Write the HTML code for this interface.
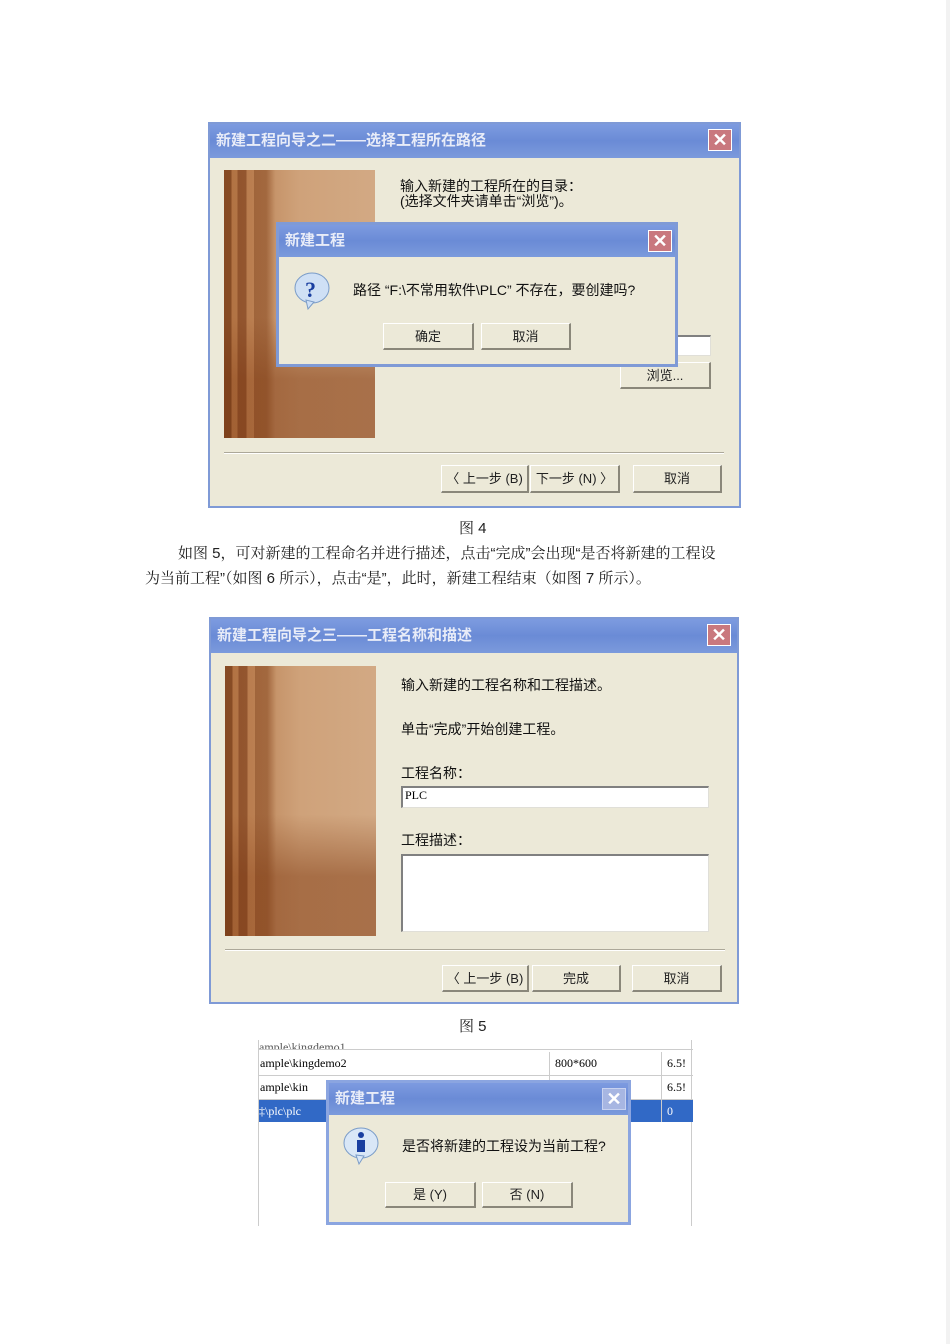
<!DOCTYPE html>
<html><head><meta charset="utf-8"><style>
*{margin:0;padding:0;box-sizing:border-box}
body{width:950px;height:1344px;background:#fff;position:relative;font-family:"Liberation Sans","Noto Sans CJK SC",sans-serif;overflow:hidden}
.a{position:absolute}
.dlg{position:absolute;background:#ece9d8;border:2px solid #7f9ad6}
.tb{position:absolute;left:0;right:0;top:0;background:linear-gradient(#7d9be0,#6a8bd6 50%,#7b9adc);color:#e8ecf8;font-size:15px;font-weight:bold;padding-left:6px}
.x{position:absolute;width:24px;height:22px;background:#c9787e;border:1px solid #fff;color:#fff;font-size:18px;line-height:20px;text-align:center;font-weight:bold}
.btn{position:absolute;background:#ece9d8;border:1px solid #fff;border-right:2px solid #8a877a;border-bottom:2px solid #8a877a;font-size:13px;text-align:center;color:#222}
.t{position:absolute;font-size:14px;color:#111;white-space:nowrap}
.pic{position:absolute;background:
linear-gradient(90deg,rgba(110,50,15,.65) 0 5%,rgba(170,100,50,.4) 5% 9%,rgba(120,55,20,.6) 9% 15%,rgba(180,110,60,.35) 15% 20%,rgba(130,65,25,.5) 20% 28%,transparent 34%),
linear-gradient(0deg,rgba(140,75,35,.6) 0 22%,transparent 45%),
linear-gradient(90deg,#b4784a,#cfa27a 50%,#d2a984)}
.sep{position:absolute;height:2px;border-top:1px solid #aca899;border-bottom:1px solid #fff}
.in{position:absolute;background:#fff;border-top:2px solid #808080;border-left:2px solid #808080;border-right:1px solid #e0dfd8;border-bottom:1px solid #e0dfd8}
p.tx{position:absolute;font-size:15px;color:#222;white-space:nowrap;font-family:"Liberation Sans","Noto Serif CJK SC",serif}
</style></head><body>

<div class="dlg" style="left:208px;top:122px;width:533px;height:386px">
 <div class="tb" style="height:34px;line-height:34px">新建工程向导之二——选择工程所在路径</div>
 <div class="x" style="left:498px;top:5px">✕</div>
 <div class="pic" style="left:14px;top:46px;width:151px;height:268px"></div>
 <div class="t" style="left:190px;top:55px;line-height:15px">输入新建的工程所在的目录：<br>(选择文件夹请单击“浏览”)。</div>
 <div class="in" style="left:468px;top:211px;width:33px;height:21px;border-left:none"></div>
 <div class="btn" style="left:410px;top:238px;width:91px;height:27px;line-height:25px">浏览...</div>
 <div class="sep" style="left:14px;top:328px;width:500px"></div>
 <div class="btn" style="left:231px;top:341px;width:88px;height:28px;line-height:26px">〈 上一步 (B)</div>
 <div class="btn" style="left:320px;top:341px;width:90px;height:28px;line-height:26px">下一步 (N) 〉</div>
 <div class="btn" style="left:423px;top:341px;width:89px;height:28px;line-height:26px">取消</div>
</div>
<div class="dlg" style="left:276px;top:222px;width:402px;height:145px;border-width:3px">
 <div class="tb" style="height:32px;line-height:32px">新建工程</div>
 <div class="x" style="left:369px;top:5px">✕</div>
 <svg class="a" style="left:15px;top:47px" width="36" height="38"><ellipse cx="18" cy="16" rx="17" ry="15" fill="#cfe0f5" stroke="#7a9cc8"/><path d="M12 28 L14 37 L20 30z" fill="#cfe0f5" stroke="#7a9cc8"/><text x="11" y="25" font-size="22" font-weight="bold" fill="#1a3fa0" font-family="Liberation Serif">?</text></svg>
 <div class="t" style="left:74px;top:55px">路径 “F:\不常用软件\PLC” 不存在，要创建吗?</div>
 <div class="btn" style="left:104px;top:98px;width:91px;height:27px;line-height:25px">确定</div>
 <div class="btn" style="left:202px;top:98px;width:90px;height:27px;line-height:25px">取消</div>
</div>

<p class="tx" style="left:459px;top:517px">图 4</p>
<p class="tx" style="left:178px;top:542px">如图 5，可对新建的工程命名并进行描述，点击“完成”会出现“是否将新建的工程设</p>
<p class="tx" style="left:145px;top:567px">为当前工程”（如图 6 所示），点击“是”，此时，新建工程结束（如图 7 所示）。</p>

<div class="dlg" style="left:209px;top:617px;width:530px;height:387px">
 <div class="tb" style="height:34px;line-height:34px">新建工程向导之三——工程名称和描述</div>
 <div class="x" style="left:496px;top:5px">✕</div>
 <div class="pic" style="left:14px;top:47px;width:151px;height:270px"></div>
 <div class="t" style="left:190px;top:56px">输入新建的工程名称和工程描述。</div>
 <div class="t" style="left:190px;top:100px">单击“完成”开始创建工程。</div>
 <div class="t" style="left:190px;top:144px">工程名称：</div>
 <div class="in" style="left:190px;top:167px;width:308px;height:22px;font-size:12px;padding-left:2px;font-family:'Liberation Serif',serif">PLC</div>
 <div class="t" style="left:190px;top:211px">工程描述：</div>
 <div class="in" style="left:190px;top:235px;width:308px;height:78px"></div>
 <div class="sep" style="left:14px;top:330px;width:500px"></div>
 <div class="btn" style="left:231px;top:346px;width:87px;height:27px;line-height:25px">〈 上一步 (B)</div>
 <div class="btn" style="left:321px;top:346px;width:89px;height:27px;line-height:25px">完成</div>
 <div class="btn" style="left:421px;top:346px;width:90px;height:27px;line-height:25px">取消</div>
</div>

<p class="tx" style="left:459px;top:1015px">图 5</p>

<div class="a" style="left:258px;top:1040px;width:434px;height:186px;border-left:1px solid #ccc;border-right:1px solid #ccc;font-family:'Liberation Serif',serif;font-size:12px">
 <div class="a" style="left:0;top:0;width:434px;height:10px;border-bottom:1px solid #ccc;overflow:hidden;color:#555">ample\kingdemo1</div>
 <div class="a" style="left:0;top:12px;width:434px;height:24px;border-bottom:1px solid #ccc;line-height:22px;padding-left:1px">ample\kingdemo2</div>
 <div class="a" style="left:296px;top:12px;line-height:22px">800*600</div>
 <div class="a" style="left:408px;top:12px;line-height:22px">6.5!</div>
 <div class="a" style="left:0;top:36px;width:434px;height:24px;border-bottom:1px solid #ccc;line-height:22px;padding-left:1px">ample\kin</div>
 <div class="a" style="left:408px;top:36px;line-height:22px">6.5!</div>
 <div class="a" style="left:0;top:60px;width:434px;height:22px;background:#3169c6;color:#fff;line-height:22px">‡\plc\plc</div>
 <div class="a" style="left:408px;top:60px;line-height:22px;color:#fff">0</div>
 <div class="a" style="left:290px;top:12px;width:1px;height:70px;background:#ccc"></div>
 <div class="a" style="left:402px;top:12px;width:1px;height:70px;background:#ccc"></div>
</div>
<div class="dlg" style="left:326px;top:1080px;width:305px;height:145px;border-width:3px;border-color:#8ba5e0">
 <div class="tb" style="height:32px;line-height:32px">新建工程</div>
 <div class="x" style="left:273px;top:5px;background:#a7b6e2;border-color:#c8d2f0">✕</div>
 <svg class="a" style="left:13px;top:43px" width="38" height="40"><ellipse cx="19" cy="17" rx="17" ry="15" fill="#d9e7f7" stroke="#7a9cc8"/><path d="M14 29 L17 38 L22 30z" fill="#d9e7f7" stroke="#7a9cc8"/><circle cx="19" cy="9" r="3" fill="#1a3fa0"/><rect x="15" y="14" width="8" height="12" fill="#1a3fa0"/></svg>
 <div class="t" style="left:73px;top:53px">是否将新建的工程设为当前工程?</div>
 <div class="btn" style="left:56px;top:99px;width:91px;height:26px;line-height:24px">是 (Y)</div>
 <div class="btn" style="left:153px;top:99px;width:91px;height:26px;line-height:24px">否 (N)</div>
</div>

<div class="a" style="left:946px;top:0;width:4px;height:1344px;background:#f2f2f2"></div>
</body></html>
